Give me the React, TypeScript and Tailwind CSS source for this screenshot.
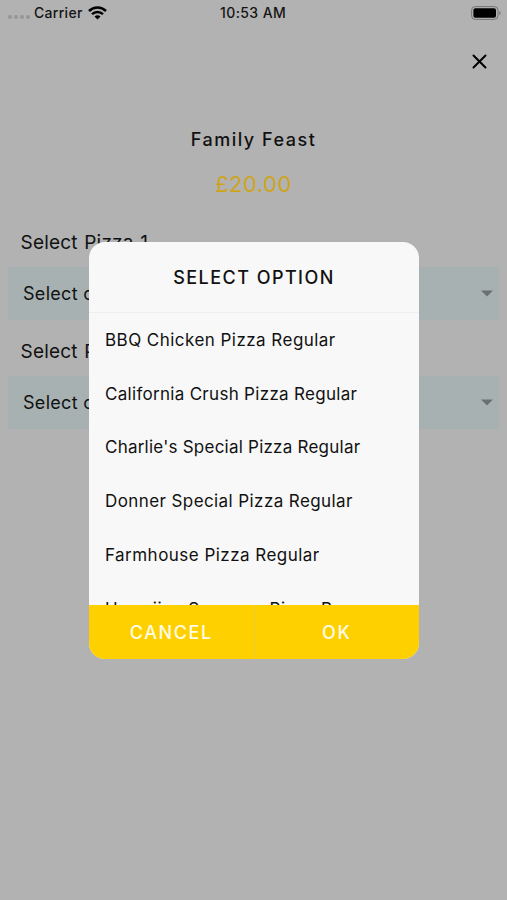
import React from 'react';

interface Option {
  label: string;
  tracking: string;
}

const OPTIONS: Option[] = [
  { label: 'BBQ Chicken Pizza Regular', tracking: 'tracking-[0.46px]' },
  { label: 'California Crush Pizza Regular', tracking: 'tracking-[0.3px]' },
  { label: "Charlie's Special Pizza Regular", tracking: 'tracking-[0.23px]' },
  { label: 'Donner Special Pizza Regular', tracking: 'tracking-[0.41px]' },
  { label: 'Farmhouse Pizza Regular', tracking: 'tracking-[0.47px]' },
  { label: 'Hawaiian Supreme Pizza Reg', tracking: 'tracking-[0.55px]' },
];

const StatusBar: React.FC = () => (
  <header className="relative flex h-[26px] items-center justify-between pl-2 pr-[6px] text-[14px] font-medium leading-none text-[#151515]">
    <div className="flex items-center">
      <div className="mt-[8px] flex gap-[2px]">
        {[0, 1, 2, 3].map((dot) => (
          <span key={dot} className="h-[4px] w-[4px] rounded-full bg-[#969696]" />
        ))}
      </div>
      <span className="ml-[4px] tracking-[0.3px]">Carrier</span>
      <svg className="ml-[5px]" width="19" height="14" viewBox="0 0 19 14" fill="none" stroke="#000">
        <path d="M1 5a12.2 12.2 0 0 1 17 0" strokeWidth="2.6" />
        <path d="M4 8.2a8 8 0 0 1 11 0" strokeWidth="2.4" />
        <path d="M6.5 10.6a4.4 4.4 0 0 1 6 0L9.5 13.6z" fill="#000" stroke="none" />
      </svg>
    </div>
    <span className="absolute left-[220px] tracking-[0.4px]">10:53 AM</span>
    <svg width="30" height="14" viewBox="0 0 30 14">
      <rect x="0.6" y="0.6" width="26.4" height="12.8" rx="3.6" fill="none" stroke="#747474" />
      <rect x="2.4" y="2.3" width="22.6" height="9.4" rx="2" fill="#000" />
      <path d="M28.4 4.8c1.6.8 1.6 3.6 0 4.4z" fill="#747474" />
    </svg>
  </header>
);

const PizzaField: React.FC<{ label: string }> = ({ label }) => (
  <section>
    <h2 className="pl-[20.5px] text-[19px] leading-[24px] tracking-[0.2px] [word-spacing:1px]">{label}</h2>
    <div className="mx-2 mt-[12px] flex h-[53px] items-center justify-between bg-[#a8b1b2] pl-[15px] pr-[6px]">
      <span className="text-[18px] tracking-[0.3px]">Select option</span>
      <svg width="12" height="7" viewBox="0 0 12 7">
        <path d="M0 0.5h12L6 6.5z" fill="#687071" />
      </svg>
    </div>
  </section>
);

const SelectDialog: React.FC = () => (
  <div
    role="dialog"
    className="absolute left-[89px] top-[242px] flex h-[417px] w-[330px] flex-col overflow-hidden rounded-[16px] bg-[#f8f8f8]"
  >
    <h3 className="flex h-[71px] shrink-0 items-center justify-center border-b border-[#edf0f0] text-[18px] font-medium tracking-[1.45px]">
      SELECT OPTION
    </h3>
    <ul className="min-h-0 flex-1 overflow-hidden pt-px">
      {OPTIONS.map(({ label, tracking }) => (
        <li key={label} className="flex h-[53.7px] items-center whitespace-nowrap pl-4 text-[17px]">
          <span className={tracking}>{label}</span>
        </li>
      ))}
    </ul>
    <div className="flex h-[54px] shrink-0 bg-[#ffd000] text-[18px] font-medium text-[#fffbe6]">
      <button className="flex-1 border-r border-[#e9cb35] tracking-[1.6px]">CANCEL</button>
      <button className="flex-1 tracking-[1.6px]">OK</button>
    </div>
  </div>
);

export default function App() {
  return (
    <div className="relative h-[900px] w-[507px] overflow-hidden bg-[#b2b2b2] font-[Inter,sans-serif] text-[#111]">
      <StatusBar />
      <div className="flex h-[100px] justify-end pr-[20px] pt-[28px]">
        <svg width="15" height="15" viewBox="0 0 15 15" stroke="#000" strokeWidth="2" strokeLinecap="round">
          <path d="M1.5 1.5l12 12M13.5 1.5l-12 12" />
        </svg>
      </div>
      <div className="text-center">
        <h1 className="text-[18px] font-medium leading-[28px] tracking-[1.5px]">Family Feast</h1>
        <p className="mt-[16px] text-[22px] leading-[28px] tracking-[0.5px] text-[#cda51c]">£20.00</p>
      </div>
      <div className="mt-[33px] flex flex-col gap-[20px]">
        <PizzaField label="Select Pizza 1" />
        <PizzaField label="Select Pizza 2" />
      </div>
      <SelectDialog />
    </div>
  );
}
